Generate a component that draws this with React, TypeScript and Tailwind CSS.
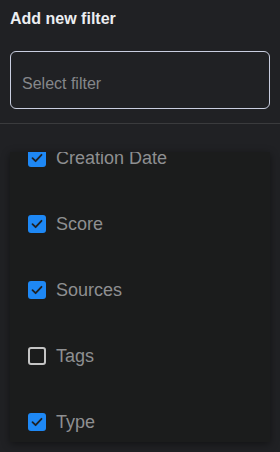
import React from "react";

const filters = [
  { name: "Creation Date", checked: true },
  { name: "Score", checked: true },
  { name: "Sources", checked: true },
  { name: "Tags", checked: false },
  { name: "Type", checked: true },
];

function CheckBox({ checked }: { checked: boolean }) {
  if (!checked) {
    return <div className="shrink-0 w-[18px] h-[18px] rounded-[3px] border-2 border-[#c4c4c4]" />;
  }
  return (
    <div className="shrink-0 w-[18px] h-[18px] rounded-[3px] bg-[#1e88f5] flex items-center justify-center">
      <svg width="14" height="14" viewBox="0 0 14 14" fill="none">
        <path d="M2.5 7.2 L5.6 10.2 L11.5 3.8" stroke="#1f2124" strokeWidth="1.8" strokeLinecap="round" strokeLinejoin="round" />
      </svg>
    </div>
  );
}

export default function App() {
  return (
    <div className="w-[280px] h-[452px] bg-[#202124] overflow-hidden font-['Liberation_Sans',Arial,sans-serif]">
      <div className="px-[10px] pt-[9px]">
        <h2 className="text-[16px] leading-[20px] font-bold text-[#eceef1]">Add new filter</h2>
        <div className="mt-[22px] h-[58px] rounded-[6px] border border-[#c9cee0] flex items-center px-[11px] pt-[8px]">
          <span className="text-[16px] text-[#85878a]">Select filter</span>
        </div>
      </div>

      <div className="mt-[14px] h-px bg-[#3a3b3d]" />

      {/* Filter list (scrolled) */}
      <div className="mx-[10px] mt-[28px] h-[290px] overflow-hidden bg-[#1b1c1c] shadow-[0_2px_8px_rgba(0,0,0,0.45)]">
        <div className="-mt-[27px] px-[18px]">
          {filters.map((f) => (
            <div key={f.name} className="h-[66px] flex items-center gap-[10px]">
              <CheckBox checked={f.checked} />
              <span className="text-[18px] leading-[12px] text-[#8e8f91]">{f.name}</span>
            </div>
          ))}
        </div>
      </div>
    </div>
  );
}
